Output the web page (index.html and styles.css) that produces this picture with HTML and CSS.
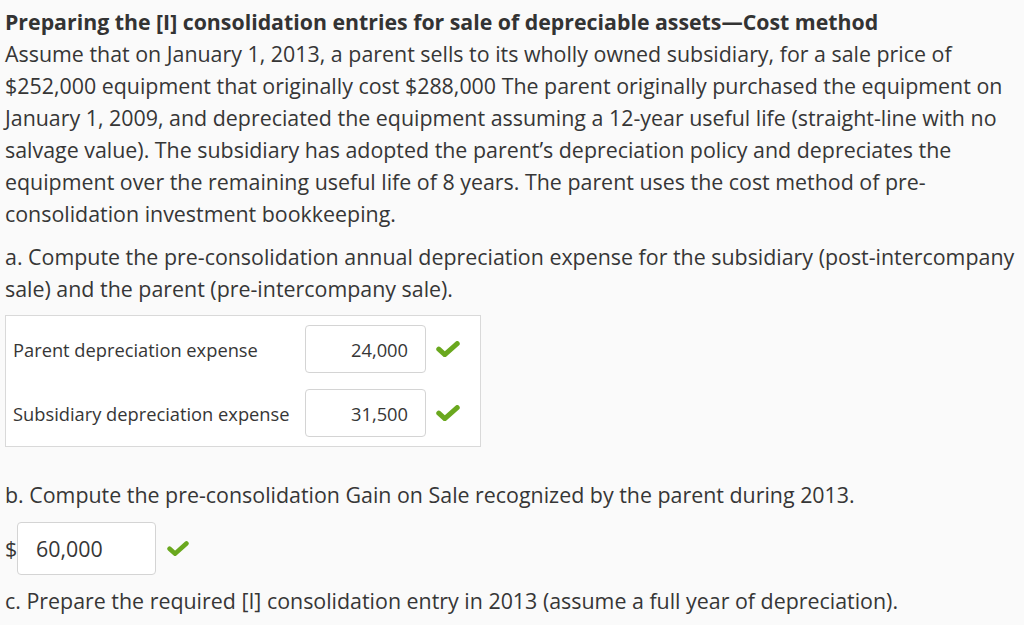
FILE: index.html
```html
<!DOCTYPE html>
<html>
<head>
<meta charset="utf-8">
<link rel="stylesheet" href="styles.css">
</head>
<body>
<div class="page">
  <h1 class="title">Preparing the [I] consolidation entries for sale of depreciable assets—Cost method</h1>
  <p class="intro">Assume that on January 1, 2013, a parent sells to its wholly owned subsidiary, for a sale price of $252,000 equipment that originally cost $288,000 The parent originally purchased the equipment on January 1, 2009, and depreciated the equipment assuming a 12-year useful life (straight-line with no salvage value). The subsidiary has adopted the parent’s depreciation policy and depreciates the equipment over the remaining useful life of 8 years. The parent uses the cost method of pre-consolidation investment bookkeeping.</p>
  <p class="q">a. Compute the pre-consolidation annual depreciation expense for the subsidiary (post-intercompany sale) and the parent (pre-intercompany sale).</p>
  <div class="table">
    <div class="row">
      <span class="label">Parent depreciation expense</span>
      <span class="input num">24,000</span>
      <svg class="check" viewBox="0 0 24 16" width="24" height="16"><path d="M2.8 8.2 L8.8 13.6 L21.2 2.6" fill="none" stroke="#6aa81e" stroke-width="5" stroke-linecap="round" stroke-linejoin="miter"/></svg>
    </div>
    <div class="row">
      <span class="label">Subsidiary depreciation expense</span>
      <span class="input num">31,500</span>
      <svg class="check" viewBox="0 0 24 16" width="24" height="16"><path d="M2.8 8.2 L8.8 13.6 L21.2 2.6" fill="none" stroke="#6aa81e" stroke-width="5" stroke-linecap="round" stroke-linejoin="miter"/></svg>
    </div>
  </div>
  <p class="q qb">b. Compute the pre-consolidation Gain on Sale recognized by the parent during 2013.</p>
  <div class="gain">
    <span class="dollar">$</span>
    <span class="input gain-input">60,000</span>
    <svg class="check" viewBox="0 0 24 16" width="22" height="15"><path d="M2.8 8.2 L8.8 13.6 L21.2 2.6" fill="none" stroke="#6aa81e" stroke-width="5" stroke-linecap="round" stroke-linejoin="miter"/></svg>
  </div>
  <p class="q qc">c. Prepare the required [I] consolidation entry in 2013 (assume a full year of depreciation).</p>
</div>
</body>
</html>
```
FILE: styles.css
```css
html, body {
  margin: 0;
  padding: 0;
  background: #fafafa;
}
body {
  font-family: "Open Sans", "Liberation Sans", sans-serif;
  color: #363636;
}
.page {
  padding: 6px 5px 0 5px;
}
.title {
  font-size: 21.3px;
  font-weight: 700;
  line-height: 32px;
  margin: 0;
  color: #333;
}
.intro {
  font-size: 21.4px;
  line-height: 32px;
  margin: 0;
}
.q {
  font-size: 21.4px;
  line-height: 32px;
  margin: 11px 0 0 0;
}
.table {
  margin-top: 10px;
  width: 476px;
  border: 1px solid #d9d9d9;
  background: #fff;
  padding: 9px 0 9px 7px;
  box-sizing: border-box;
  display: flex;
  flex-direction: column;
  gap: 16px;
}
.row {
  display: flex;
  align-items: center;
  height: 48px;
}
.label {
  font-size: 18.3px;
  width: 292px;
}
.input {
  box-sizing: border-box;
  border: 1px solid #d4d4d4;
  border-radius: 4px;
  background: #fff;
  font-size: 18.3px;
  height: 48px;
  display: flex;
  align-items: center;
}
.num {
  width: 121px;
  justify-content: flex-end;
  padding-right: 17px;
}
.row .check {
  margin-left: 10px;
}
.qb {
  margin-top: 32px;
}
.gain {
  display: flex;
  align-items: center;
  margin-top: 11px;
}
.dollar {
  font-size: 21.4px;
  width: 12px;
}
.gain-input {
  width: 139px;
  height: 53px;
  padding-left: 18px;
  font-size: 21.4px;
}
.gain .check {
  margin-left: 11px;
}
.qc {
  margin-top: 10px;
}
```
